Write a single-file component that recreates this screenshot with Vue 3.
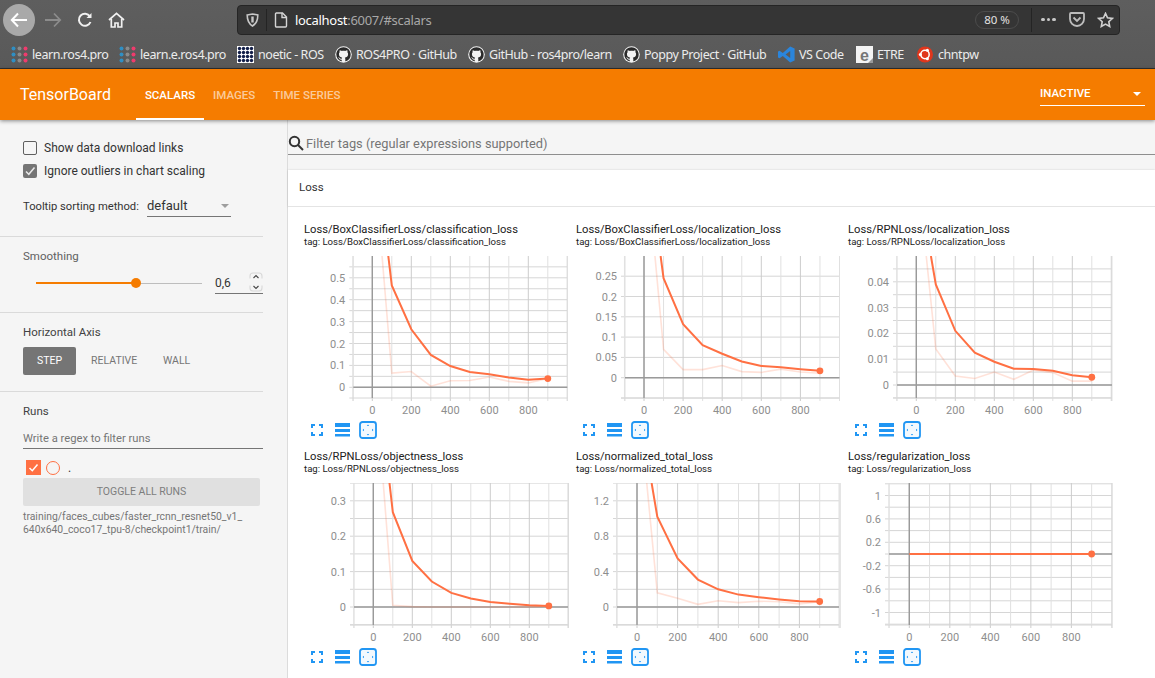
<script setup>
const bookmarks = [
  { label: 'learn.ros4.pro', icon: 'dots', width: 108 },
  { label: 'learn.e.ros4.pro', icon: 'dots', width: 118 },
  { label: 'noetic - ROS', icon: 'grid', width: 98 },
  { label: 'ROS4PRO · GitHub', icon: 'gh', width: 133 },
  { label: 'GitHub - ros4pro/learn', icon: 'gh', width: 155 },
  { label: 'Poppy Project · GitHub', icon: 'gh', width: 155 },
  { label: 'VS Code', icon: 'vs', width: 78 },
  { label: 'ETRE', icon: 'etre', width: 61 },
  { label: 'chntpw', icon: 'ubuntu', width: 70 }
]
const ghPath = 'M8 0C3.58 0 0 3.58 0 8c0 3.54 2.29 6.53 5.47 7.59.4.07.55-.17.55-.38 0-.19-.01-.82-.01-1.49-2.01.37-2.53-.49-2.69-.94-.09-.23-.48-.94-.82-1.13-.28-.15-.68-.52-.01-.53.63-.01 1.08.58 1.23.82.72 1.21 1.87.87 2.33.66.07-.52.28-.87.51-1.07-1.78-.2-3.64-.89-3.64-3.95 0-.87.31-1.59.82-2.15-.08-.2-.36-1.02.08-2.12 0 0 .67-.21 2.2.82.64-.18 1.32-.27 2-.27.68 0 1.36.09 2 .27 1.53-1.04 2.2-.82 2.2-.82.44 1.1.16 1.92.08 2.12.51.56.82 1.27.82 2.15 0 3.07-1.87 3.75-3.65 3.95.29.25.54.73.54 1.48 0 1.07-.01 1.93-.01 2.2 0 .21.15.46.55.38A8.013 8.013 0 0016 8c0-4.42-3.58-8-8-8z'
const dotColors = ['#2f8fc4', '#8a8a8a', '#ef3b6d']

const raw = [
  { name: 'Loss/BoxClassifierLoss/classification_loss', col: 0, row: 0, left: 353.3, right: 567.3, x0: 372.3, sx: 19.5, y0: 387.3, unit: 0.1, unitPx: 21.9, half: 10.95,
    labels: ['0.5', '0.4', '0.3', '0.2', '0.1', '0'], mainTop: 82, faintTop: 50,
    main: [0.465, 0.265, 0.148, 0.097, 0.07, 0.06, 0.045, 0.034, 0.04], faint: [0.065, 0.072, 0.005, 0.03, 0.031, 0.047, 0.027, 0.02, 0.04] },
  { name: 'Loss/BoxClassifierLoss/localization_loss', col: 1, row: 0, left: 625, right: 839.5, x0: 644, sx: 19.55, y0: 377.7, unit: 0.05, unitPx: 20.3, half: 20.3,
    labels: ['0.25', '0.2', '0.15', '0.1', '0.05', '0'], mainTop: 85, faintTop: 56,
    main: [0.245, 0.132, 0.08, 0.059, 0.04, 0.029, 0.026, 0.021, 0.017], faint: [0.07, 0.02, 0.02, 0.03, 0.015, 0.013, 0.021, 0.014, 0.011] },
  { name: 'Loss/RPNLoss/localization_loss', col: 2, row: 0, left: 897, right: 1112, x0: 916.3, sx: 19.5, y0: 385, unit: 0.01, unitPx: 25.8, half: 12.9,
    labels: ['0.04', '0.03', '0.02', '0.01', '0'], mainTop: 75, faintTop: 51,
    main: [0.039, 0.021, 0.0125, 0.009, 0.0063, 0.0062, 0.0055, 0.0038, 0.003], faint: [0.014, 0.0035, 0.0025, 0.005, 0.0022, 0.0058, 0.0048, 0.0015, 0.0015] },
  { name: 'Loss/RPNLoss/objectness_loss', col: 0, row: 1, left: 354, right: 568, x0: 373.3, sx: 19.5, y0: 607, unit: 0.1, unitPx: 35.4, half: 17.7,
    labels: ['0.3', '0.2', '0.1', '0'], mainTop: 83, faintTop: 51,
    main: [0.268, 0.13, 0.072, 0.04, 0.024, 0.014, 0.009, 0.005, 0.003], faint: [0.005, 0.001, 0, 0, 0, 0, 0, 0, 0.003] },
  { name: 'Loss/normalized_total_loss', col: 1, row: 1, left: 617, right: 839, x0: 637, sx: 20.3, y0: 607, unit: 0.4, unitPx: 35.4, half: 17.7,
    labels: ['1.2', '0.8', '0.4', '0'], mainTop: 72, faintTop: 48,
    main: [1.02, 0.55, 0.31, 0.2, 0.14, 0.11, 0.085, 0.065, 0.062], faint: [0.16, 0.1, 0.03, 0.07, 0.05, 0.065, 0.06, 0.035, 0.06] },
  { name: 'Loss/regularization_loss', col: 2, row: 1, left: 889, right: 1112, x0: 909.3, sx: 20.26, y0: 554, unit: 0.4, unitPx: 23.4, half: 11.7,
    labels: ['1', '0.6', '0.2', '-0.2', '-0.6', '-1'], flat: true }
]

const charts = raw.map((c) => {
  const ox = 304 + 272 * c.col
  const oy = 256 + 227 * c.row
  const bottom = 142
  const y0 = c.y0 - oy
  const x0 = c.x0 - ox
  const left = c.left - ox
  const right = c.right - ox
  const px = (s) => x0 + (s * c.sx) / 100
  const py = (v) => y0 - (v / c.unit) * c.unitPx
  const hLines = []
  for (let y = y0 % c.half; y <= bottom; y += c.half) hLines.push(+y.toFixed(2))
  const vLines = []
  for (let s = 0; px(s) <= right + 1; s += 100) vLines.push({ x: +px(s).toFixed(2), major: s % 200 === 0 })
  for (let s = -100; px(s) >= left - 1; s -= 100) vLines.push({ x: +px(s).toFixed(2), major: false })
  const xLabels = [0, 200, 400, 600, 800].map((s) => ({ t: String(s), x: px(s) }))
  const yLabels = c.labels.map((t) => ({ t, y: py(parseFloat(t)) + 4 }))
  let mainD = ''
  let faintD = ''
  if (c.flat) {
    mainD = `M${px(0)} ${y0} L${px(900)} ${y0}`
  } else {
    const line = (start, vals) =>
      `M${px(start)} 0 ` + vals.map((v, i) => `L${px((i + 1) * 100).toFixed(2)} ${py(v).toFixed(2)}`).join(' ')
    mainD = line(c.mainTop, c.main)
    faintD = line(c.faintTop, c.faint)
  }
  const lastVal = c.flat ? 0 : c.main[8]
  return {
    ...c, bottom, plotX0: x0, plotY0: y0, l: left, r: right, hLines, vLines, xLabels, yLabels, mainD, faintD,
    dot: { x: px(900), y: py(lastVal) }
  }
})
</script>

<template>
  <div class="page">
    <div class="chrome">
      <div class="navrow">
        <div class="backbtn">
          <svg width="18" height="16" viewBox="0 0 18 16" fill="none" stroke="#fff" stroke-width="2"><path d="M17 8H2M8 1.5 1.8 8 8 14.5" /></svg>
        </div>
        <svg class="fwd" width="18" height="16" viewBox="0 0 18 16" fill="none" stroke="#8c8c8c" stroke-width="1.8"><path d="M1 8h15M10 1.5 16.2 8 10 14.5" /></svg>
        <svg class="reload" width="16" height="16" viewBox="0 0 16 16" fill="none" stroke="#f0f0f0" stroke-width="2"><path d="M13.5 10a6 6 0 1 1-.6-5.6" /><path d="M14.5 1v5h-5z" fill="#f0f0f0" stroke="none" /></svg>
        <svg class="home" width="17" height="16" viewBox="0 0 17 16" fill="none" stroke="#f0f0f0" stroke-width="1.7"><path d="M1 8 8.5 1.3 16 8" /><path d="M3.3 7v8h3.7v-4h3v4h3.7V7" /></svg>
        <div class="urlbar">
          <svg class="shield" width="13" height="14" viewBox="0 0 13 14" fill="none" stroke="#c8c8c8" stroke-width="1.6"><path d="M1.2 2 6.5 1l5.3 1c0 5-1 8.5-5.3 11C2.2 10.5 1.2 7 1.2 2z" /><path d="M6.5 3.5v6" stroke-width="2.4" /></svg>
          <span class="usep"></span>
          <svg class="file" width="14" height="16" viewBox="0 0 14 16" fill="none" stroke="#d5d5d5" stroke-width="1.4"><path d="M2 1h6.5L12.5 5v9a1 1 0 0 1-1 1h-9a1 1 0 0 1-1-1V2a1 1 0 0 1 1-1z" /><path d="M8 1v4.5h4.5" /></svg>
          <span class="url"><span class="host">localhost</span>:6007/#scalars</span>
          <span class="pill">80 %</span>
          <span class="usep2"></span>
          <span class="more"><i></i><i></i><i></i></span>
          <svg class="pocket" width="16" height="15" viewBox="0 0 16 15" fill="none" stroke="#bdbdbd" stroke-width="1.8"><path d="M1 2a1 1 0 0 1 1-1h12a1 1 0 0 1 1 1v5a7 7 0 0 1-14 0z" /><path d="M4.5 5.5 8 9l3.5-3.5" /></svg>
          <svg class="star" width="17" height="16" viewBox="0 0 17 16" fill="none" stroke="#d0d0d0" stroke-width="1.6"><path d="M8.5 1.4 10.5 5.8l4.8.6-3.5 3.3.9 4.8-4.2-2.4-4.2 2.4.9-4.8L1.7 6.4l4.8-.6z" /></svg>
        </div>
      </div>
      <div class="bookrow">
        <div v-for="b in bookmarks" :key="b.label" class="book" :style="{ width: b.width + 'px' }">
          <svg class="bicon" width="17" height="17" viewBox="0 0 17 17">
            <template v-if="b.icon === 'dots'">
              <template v-for="(col, i) in dotColors" :key="i">
                <circle v-for="j in 3" :key="j" :cx="2.5 + i * 6" :cy="2.5 + (j - 1) * 6" r="2" :fill="col" />
              </template>
            </template>
            <template v-else-if="b.icon === 'grid'">
              <rect x="0" y="0" width="17" height="17" fill="#fff" />
              <template v-for="i in 4" :key="'g' + i">
                <circle v-for="j in 4" :key="j" :cx="2.5 + (i - 1) * 4" :cy="2.5 + (j - 1) * 4" r="1.7" fill="#14204a" />
              </template>
            </template>
            <template v-else-if="b.icon === 'gh'">
              <circle cx="8.5" cy="8.5" r="8.3" fill="#f2f2f2" />
              <path :d="ghPath" fill="#2a2a2a" transform="translate(1.3 1.3) scale(.9)" />
            </template>
            <template v-else-if="b.icon === 'vs'">
              <path d="M12.2.4 16.6 2.5v12L12.2 16.6 4.8 9.900 1.600 12.300 0 11.400V5.600l1.600-.9 3.200 2.400zM12.200 5 7.600 8.500l4.600 3.500z" fill="#2a85dc" fill-rule="evenodd" />
            </template>
            <template v-else-if="b.icon === 'etre'">
              <rect x="0" y="0" width="17" height="17" fill="#f4f4f4" />
              <path d="M12 17 17 12v5z" fill="#9a9a9a" />
              <text x="8.5" y="14.5" text-anchor="middle" class="etre-e">e</text>
            </template>
            <template v-else>
              <circle cx="8" cy="8.5" r="8" fill="#e0361c" />
              <circle cx="8" cy="8.5" r="4.2" fill="none" stroke="#fff" stroke-width="1.5" />
              <circle cx="3.3" cy="8.5" r="1.5" fill="#fff" />
              <circle cx="10.4" cy="4.3" r="1.5" fill="#fff" />
              <circle cx="10.4" cy="12.7" r="1.5" fill="#fff" />
            </template>
          </svg>
          <span class="btext">{{ b.label }}</span>
        </div>
      </div>
    </div>

    <header class="tbbar">
      <div class="brand">TensorBoard</div>
      <nav class="tabs">
        <span class="tab active">SCALARS</span>
        <span class="tab">IMAGES</span>
        <span class="tab">TIME SERIES</span>
      </nav>
      <div class="inactive"><span>INACTIVE</span><i class="caret"></i></div>
    </header>

    <div class="body">
      <aside class="side">
        <section class="sec sec1">
          <label class="chk"><span class="box"></span>Show data download links</label>
          <label class="chk second">
            <span class="box on">
              <svg width="14" height="14" viewBox="0 0 14 14" fill="none" stroke="#e8e8e8" stroke-width="1.5"><path d="M3 7.5 5.8 10.3 11.5 3.5" /></svg>
            </span>Ignore outliers in chart scaling
          </label>
          <div class="sortrow">
            <span class="sortlabel">Tooltip sorting method:</span>
            <span class="select">default<i class="selcaret"></i></span>
          </div>
        </section>
        <section class="sec sec2">
          <div class="label">Smoothing</div>
          <div class="smooth">
            <div class="track"><div class="fill"></div><div class="knob"></div></div>
            <div class="num">
              0,6
              <svg class="spin" width="14" height="20" viewBox="0 0 14 20" fill="none" stroke="#444" stroke-width="1.1">
                <path d="M1 6.5V4a3 3 0 0 1 3-3h6a3 3 0 0 1 3 3v2.5" stroke="#d8d8d8" />
                <path d="M4.5 6 7 3.500 9.500 6" />
                <path d="M1 13.500V16a3 3 0 0 0 3 3h6a3 3 0 0 0 3-3v-2.500" stroke="#d8d8d8" />
                <path d="M4.500 14 7 16.500 9.500 14" />
              </svg>
            </div>
          </div>
        </section>
        <section class="sec sec3">
          <div class="label dark">Horizontal Axis</div>
          <div class="axisbtns">
            <span class="step">STEP</span>
            <span class="relative">RELATIVE</span>
            <span class="wall">WALL</span>
          </div>
        </section>
        <section class="runs">
          <div class="label dark">Runs</div>
          <div class="regex">Write a regex to filter runs</div>
          <div class="runrow">
            <span class="runbox">
              <svg width="15" height="15" viewBox="0 0 15 15" fill="none" stroke="#fff" stroke-width="1.5"><path d="M3.5 8 6.3 10.7 11.5 4.5" /></svg>
            </span>
            <span class="runcircle"></span>
            <span class="rundot">.</span>
          </div>
          <div class="toggle">TOGGLE ALL RUNS</div>
          <div class="runpath">training/faces_cubes/faster_rcnn_resnet50_v1_<br />640x640_coco17_tpu-8/checkpoint1/train/</div>
        </section>
      </aside>

      <main class="main">
        <div class="filter">
          <svg width="16" height="16" viewBox="0 0 16 16" fill="none" stroke="#333" stroke-width="2"><circle cx="6.5" cy="6.5" r="4.7" /><path d="M10 10l5 5" /></svg>
          <span>Filter tags (regular expressions supported)</span>
        </div>
        <div class="losshead">Loss</div>
        <div class="grid">
          <div v-for="c in charts" :key="c.name" class="card">
            <div class="title">{{ c.name }}</div>
            <div class="tag">tag: {{ c.name }}</div>
            <svg class="plot" width="268" height="165" viewBox="0 0 268 165">
              <line v-for="y in c.hLines" :key="'h' + y" :x1="c.l - 4" :x2="c.r" :y1="y" :y2="y" class="grid-h" />
              <line v-for="v in c.vLines" :key="'v' + v.x" :x1="v.x" :x2="v.x" y1="0" :y2="c.bottom + 3" :class="v.major ? 'grid-v major' : 'grid-v'" />
              <line :x1="c.l" :x2="c.l" y1="0" :y2="c.bottom + 3" class="grid-v" />
              <line :x1="c.r" :x2="c.r" y1="0" :y2="c.bottom + 3" class="grid-v" />
              <line :x1="c.l - 4" :x2="c.r" :y1="c.bottom" :y2="c.bottom" class="grid-h" />
              <line :x1="c.l" :x2="c.r" :y1="c.plotY0" :y2="c.plotY0" class="axis" />
              <line :x1="c.plotX0" :x2="c.plotX0" y1="0" :y2="c.bottom" class="axis" />
              <path v-if="c.faintD" :d="c.faintD" class="faint" />
              <path :d="c.mainD" class="mainline" />
              <circle :cx="c.dot.x" :cy="c.dot.y" r="3.4" class="dot" />
              <text v-for="l in c.yLabels" :key="'y' + l.t" :x="c.l - 8" :y="l.y" text-anchor="end" class="tick">{{ l.t }}</text>
              <text v-for="l in c.xLabels" :key="'x' + l.t" :x="l.x" y="158" text-anchor="middle" class="tick">{{ l.t }}</text>
            </svg>
            <div class="icons">
              <svg class="i-fit" width="12" height="12" viewBox="0 0 12 12" fill="none" stroke="#2196f3" stroke-width="2"><path d="M1 4V1h3M8 1h3v3M11 8v3H8M4 11H1V8" /></svg>
              <svg class="i-menu" width="15" height="14" viewBox="0 0 15 14" fill="#2196f3"><rect width="15" height="4" /><rect y="6" width="15" height="3" /><rect y="11" width="15" height="2.5" /></svg>
              <svg class="i-dom" width="18" height="18" viewBox="0 0 18 18" fill="none"><rect x="1" y="1" width="16" height="16" rx="2.5" stroke="#2196f3" stroke-width="1.8" fill="#f3f9fe" /><path d="M9 3.5 10.2 5H7.8zM9 14.5 10.2 13H7.8zM3.5 9 5 7.8v2.4zM14.5 9 13 7.8v2.4z" fill="#2196f3" /></svg>
            </div>
          </div>
        </div>
      </main>
    </div>
  </div>
</template>

<style scoped>
.page {
  width: 1155px;
  height: 678px;
  overflow: hidden;
  display: flex;
  flex-direction: column;
  font-family: Roboto, "Liberation Sans", sans-serif;
  background: #fff;
}
.chrome {
  height: 69px;
  flex: none;
  background: linear-gradient(#5e5e5e, #595959);
  border-bottom: 1px solid #2f2f2f;
  box-sizing: border-box;
}
.navrow {
  height: 39px;
  display: flex;
  align-items: center;
  padding-left: 3px;
  box-sizing: border-box;
  padding-top: 1px;
}
.backbtn {
  width: 32px;
  height: 32px;
  border-radius: 50%;
  background: #a9a9a9;
  display: flex;
  align-items: center;
  justify-content: center;
  flex: none;
  margin-right: 9px;
}
.fwd { margin-right: 15px; flex: none; }
.reload { margin-right: 15px; flex: none; }
.home { margin-right: 112px; flex: none; }
.urlbar {
  width: 883px;
  height: 30px;
  margin-top: -1px;
  flex: none;
  box-sizing: border-box;
  background: #353535;
  border: 1px solid #252525;
  border-radius: 4px;
  display: flex;
  align-items: center;
  padding-left: 8px;
  color: #a8a8a8;
  font-family: "Noto Sans", sans-serif;
  font-size: 13px;
}
.shield { flex: none; margin-right: 7px; }
.usep { width: 1px; height: 22px; background: #242424; margin-right: 7px; flex: none; }
.file { flex: none; margin-right: 7px; }
.url { width: 680px; flex: none; letter-spacing: -0.3px; }
.host { color: #fff; }
.pill {
  width: 44px;
  height: 18px;
  box-sizing: border-box;
  border: 1px solid #4c4c4c;
  border-radius: 9px;
  font-size: 11.5px;
  line-height: 16px;
  text-align: center;
  color: #e2e2e2;
  flex: none;
  margin-right: 12px;
}
.usep2 { width: 1px; height: 24px; background: #242424; flex: none; margin-right: 9px; }
.more { display: flex; gap: 2px; flex: none; width: 17px; margin-right: 11px; }
.more i { width: 3.5px; height: 3.5px; border-radius: 50%; background: #c8c8c8; display: block; }
.pocket { flex: none; margin-right: 12px; }
.star { flex: none; }
.bookrow {
  height: 29px;
  display: flex;
  align-items: center;
  padding-left: 11px;
  padding-top: 1px;
  box-sizing: border-box;
}
.book {
  display: flex;
  align-items: center;
  flex: none;
  gap: 4px;
  white-space: nowrap;
}
.bicon { flex: none; }
.btext {
  font-family: "Noto Sans", sans-serif;
  font-size: 12.5px;
  color: #ececec;
  letter-spacing: -0.45px;
}
.etre-e { font: 700 16px "Liberation Sans", sans-serif; fill: #777; }

.tbbar {
  height: 51px;
  flex: none;
  background: #f57c00;
  display: flex;
  align-items: stretch;
  color: #fff;
  position: relative;
  z-index: 2;
  box-shadow: 0 1px 4px rgba(0, 0, 0, 0.45);
}
.brand {
  font-size: 16px;
  font-weight: 400;
  line-height: 51px;
  margin-left: 20px;
  width: 116px;
  flex: none;
}
.tabs { display: flex; align-items: stretch; flex: none; width: 904px; }
.tab {
  font-size: 11.5px;
  font-weight: 500;
  line-height: 52px;
  padding: 0 9px;
  color: rgba(255, 255, 255, 0.62);
  box-sizing: border-box;
  text-align: center;
  white-space: nowrap;
}
.tab.active {
  width: 68px;
  padding: 0;
  color: #fff;
  border-bottom: 2px solid #fff;
}
.inactive {
  width: 105px;
  height: 36px;
  align-self: flex-start;
  box-sizing: content-box;
  border-bottom: 1px solid #fff;
  display: flex;
  align-items: flex-end;
  justify-content: space-between;
  font-size: 11.5px;
  font-weight: 500;
  line-height: 23px;
  flex: none;
}
.caret {
  width: 0;
  height: 0;
  border-left: 4px solid transparent;
  border-right: 4px solid transparent;
  border-top: 4px solid #fff;
  margin: 0 4px 9px 0;
}

.body { flex: 1; display: flex; min-height: 0; }
.side {
  width: 288px;
  flex: none;
  box-sizing: border-box;
  background: #f5f5f5;
  border-right: 1px solid #dcdcdc;
  color: #424242;
}
.sec {
  width: 263px;
  box-sizing: border-box;
  padding-left: 23px;
  border-bottom: 1px solid #dadada;
}
.sec1 { height: 117px; padding-top: 19px; }
.chk {
  display: flex;
  align-items: center;
  height: 18px;
  font-size: 12px;
  color: #333;
  gap: 7px;
}
.chk.second { margin-top: 5px; }
.box {
  width: 14px;
  height: 14px;
  box-sizing: border-box;
  border: 1px solid #5f5f5f;
  border-radius: 2px;
  flex: none;
  display: flex;
}
.box.on { background: #757575; border: 0; }
.sortrow { display: flex; align-items: flex-end; margin-top: 14px; }
.sortlabel { font-size: 11.2px; width: 124px; flex: none; color: #333; line-height: 21px; white-space: nowrap; }
.select {
  width: 84px;
  height: 23px;
  box-sizing: border-box;
  border-bottom: 1px solid #757575;
  font-size: 13px;
  line-height: 24px;
  color: #333;
  position: relative;
}
.selcaret {
  position: absolute;
  right: 2px;
  top: 10px;
  width: 0;
  height: 0;
  border-left: 4px solid transparent;
  border-right: 4px solid transparent;
  border-top: 4px solid #9e9e9e;
}
.sec2 { height: 76px; padding-top: 12px; }
.label { font-size: 11.5px; line-height: 14px; color: #616161; }
.label.dark { color: #424242; }
.smooth { display: flex; align-items: center; margin-top: 7px; height: 26px; }
.track {
  margin-left: 13px;
  width: 166px;
  height: 1px;
  background: #bdbdbd;
  position: relative;
  flex: none;
}
.fill { position: absolute; left: 0; top: -1px; width: 100px; height: 2px; background: #f57c00; }
.knob {
  position: absolute;
  left: 95px;
  top: -5px;
  width: 10px;
  height: 10px;
  border-radius: 50%;
  background: #f57c00;
}
.num {
  margin-left: 13px;
  width: 48px;
  height: 22px;
  flex: none;
  box-sizing: border-box;
  border-bottom: 1px solid #757575;
  font-size: 12px;
  line-height: 22px;
  color: #333;
  position: relative;
}
.spin { position: absolute; right: 0; top: 0; }
.sec3 { height: 79px; padding-top: 12px; }
.axisbtns { display: flex; align-items: center; margin-top: 8px; height: 28px; font-size: 10.5px; color: #757575; }
.step {
  width: 53px;
  height: 28px;
  background: #757575;
  color: #fff;
  border-radius: 2px;
  text-align: center;
  line-height: 27px;
  flex: none;
}
.relative { margin-left: 15px; width: 72px; flex: none; padding-bottom: 1px; }
.wall { flex: none; padding-bottom: 1px; }
.runs { padding-left: 23px; padding-top: 12px; width: 263px; box-sizing: border-box; }
.regex {
  margin-top: 12px;
  height: 19px;
  box-sizing: border-box;
  border-bottom: 1px solid #757575;
  font-size: 11.2px;
  line-height: 18px;
  color: #757575;
}
.runrow { display: flex; align-items: center; margin-top: 11px; height: 15px; padding-left: 3px; }
.runbox {
  width: 15px;
  height: 15px;
  background: #ff7043;
  flex: none;
  display: flex;
}
.runcircle {
  width: 12px;
  height: 12px;
  border: 1.5px solid #ff7043;
  border-radius: 50%;
  margin-left: 5px;
  flex: none;
}
.rundot { margin-left: 8px; font-size: 12px; line-height: 12px; color: #333; }
.toggle {
  margin-top: 3px;
  width: 237px;
  height: 28px;
  background: #e0e0e0;
  border-radius: 2px;
  font-size: 10.5px;
  line-height: 28px;
  text-align: center;
  color: #7d7d7d;
}
.runpath {
  margin-top: 4px;
  font-size: 10.4px;
  line-height: 13px;
  color: #757575;
  white-space: nowrap;
}

.main { flex: 1; min-width: 0; background: #f5f5f5; }
.filter {
  height: 35px;
  box-sizing: border-box;
  border-bottom: 1px solid #8e8e8e;
  display: flex;
  align-items: flex-end;
  font-size: 12.8px;
  color: #757575;
  gap: 2px;
  line-height: 19px;
  padding-bottom: 1px;
}
.filter svg { flex: none; margin-bottom: 2px; }
.losshead {
  margin-top: 15px;
  height: 37px;
  box-sizing: border-box;
  background: #fff;
  padding-left: 11px;
  font-size: 11.5px;
  line-height: 35px;
  color: #333;
  border-bottom: 1px solid #e4e4e4;
  box-shadow: 0 0 2px rgba(0, 0, 0, 0.15);
}
.grid {
  background: #fff;
  padding: 16px 0 0 16px;
  display: grid;
  grid-template-columns: repeat(3, 272px);
  grid-auto-rows: 227px;
  height: 480px;
  box-sizing: border-box;
}
.card { display: flex; flex-direction: column; min-width: 0; }
.title { font-size: 11.2px; line-height: 14px; color: #212121; white-space: nowrap; }
.tag { font-size: 9.6px; line-height: 10px; color: #212121; white-space: nowrap; }
.plot { display: block; margin-top: 9px; flex: none; }
.grid-h { stroke: #d6d6d6; stroke-width: 1; }
.grid-v { stroke: #e0e0e0; stroke-width: 1; }
.grid-v.major { stroke: #cccccc; }
.axis { stroke: #9a9a9a; stroke-width: 1.4; }
.mainline { fill: none; stroke: #ff7043; stroke-width: 2; }
.faint { fill: none; stroke: #ff7043; stroke-opacity: 0.2; stroke-width: 1.6; }
.dot { fill: #ff7043; }
.tick { font: 11px Roboto, "Liberation Sans", sans-serif; fill: #8e8e8e; }
.icons { display: flex; align-items: center; height: 18px; padding-left: 7px; }
.i-fit { flex: none; margin-right: 12px; }
.i-menu { flex: none; margin-right: 9px; }
.i-dom { flex: none; }
</style>

<style>
html, body { margin: 0; padding: 0; overflow: hidden; }
</style>
